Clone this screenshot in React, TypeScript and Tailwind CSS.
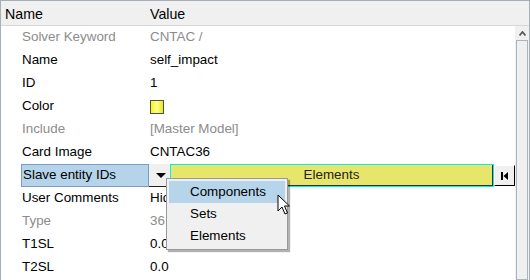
const rows: { label: string; value: string; dim?: boolean }[] = [
  { label: 'Solver Keyword', value: 'CNTAC /', dim: true },
  { label: 'Name', value: 'self_impact' },
  { label: 'ID', value: '1' },
  { label: 'Color', value: '' },
  { label: 'Include', value: '[Master Model]', dim: true },
  { label: 'Card Image', value: 'CNTAC36' },
]

const rowsAfter: { label: string; value: string; dim?: boolean }[] = [
  { label: 'User Comments', value: 'Hide In Menu/Export' },
  { label: 'Type', value: '36', dim: true },
  { label: 'T1SL', value: '0.0' },
  { label: 'T2SL', value: '0.0' },
]

function Row({ label, value, dim }: { label: string; value: string; dim?: boolean }) {
  return (
    <div className={`flex h-[23px] items-center ${dim ? 'text-[#8c8c8c]' : 'text-black'}`}>
      <div className="w-[147px] shrink-0 pl-[21px] whitespace-nowrap">{label}</div>
      <div className="flex-1 pl-[2px] whitespace-nowrap">
        {label === 'Color' ? (
          <div className="mt-[1px] h-[14px] w-[14px] border border-[#505050] bg-gradient-to-r from-[#f4f400] via-[#ffff80] to-[#e8e800]" />
        ) : (
          value
        )}
      </div>
    </div>
  )
}

export default function App() {
  return (
    <div
      className="relative h-[280px] w-[530px] overflow-hidden border-x border-t border-[#a6b0bb] bg-white text-[13.4px]"
      style={{ fontFamily: '"Liberation Sans", Arial, sans-serif' }}
    >
      {/* header */}
      <div className="flex h-[25px] items-center border-b border-[#d6d6d6] bg-[#f0f0f0] pt-[3px] text-[14.2px] text-black">
        <div className="w-[149px] pl-[4px]">Name</div>
        <div>Value</div>
      </div>

      <div className="flex h-[254px]">
        <div className="flex-1">
          {rows.map((r) => (
            <Row key={r.label} {...r} />
          ))}

          {/* selected row with entity selector */}
          <div className="flex h-[23px] items-stretch">
            <div className="ml-[20px] flex w-[128px] shrink-0 items-center border border-[#7b9cc6] bg-[#b5d4ea] pl-[1px] text-black">
              Slave entity IDs
            </div>
            <div className="flex w-[21px] items-center justify-center border-b border-[#202020] bg-[#f0f0f0] pt-[1px] pl-[2px]">
              <div className="h-0 w-0 border-x-[5px] border-t-[5px] border-x-transparent border-t-black" />
            </div>
            <div className="flex-1 border border-[#00f0f0]">
              <div className="flex h-full items-center justify-center border-r border-b border-[#303030] bg-[#e7e66a] text-[#222]">
                Elements
              </div>
            </div>
            <div className="my-[1px] flex w-[21px] items-center justify-center border-t border-l border-r border-b border-t-white border-l-white border-r-black border-b-black bg-[#f0f0f0]">
              <svg width="9" height="10" viewBox="0 0 9 10">
                <rect x="1" y="1" width="2" height="8" fill="#000" />
                <path d="M8 1 L8 9 L3.5 5 Z" fill="#000" />
              </svg>
            </div>
          </div>

          {rowsAfter.map((r) => (
            <Row key={r.label} {...r} />
          ))}
        </div>

        {/* scrollbar */}
        <div className="flex w-[14px] flex-col bg-[#f0f0f0]">
          <div className="flex h-[14px] items-center justify-center">
            <svg width="7" height="5" viewBox="0 0 7 5">
              <path d="M0.5 4.5 L3.5 1 L6.5 4.5" fill="none" stroke="#5a5a5a" strokeWidth="1.8" />
            </svg>
          </div>
          <div className="mx-[1px] flex-1 border border-[#a9b5c1] bg-[#f0f0f0]" />
        </div>
      </div>

      {/* popup menu */}
      <div className="absolute top-[177px] left-[165px] w-[122px] border border-[#999] bg-[#f0f0f0] p-[2px] text-black shadow-[2px_2px_1px_rgba(0,0,0,0.3)]">
        <div className="flex h-[22px] items-center bg-[#b6d5ea] pl-[21px]">Components</div>
        <div className="flex h-[22px] items-center pl-[21px]">Sets</div>
        <div className="flex h-[22px] items-center pl-[21px]">Elements</div>
      </div>

      {/* mouse pointer */}
      <svg className="absolute top-[193px] left-[276px]" width="14" height="22" viewBox="0 0 14 22">
        <path
          d="M1 1 L1 17 L5 13 L8 20 L10.5 19 L7.5 12 L12.5 12 Z"
          fill="#fff"
          stroke="#000"
          strokeWidth="1"
          strokeLinejoin="miter"
        />
      </svg>
    </div>
  )
}
